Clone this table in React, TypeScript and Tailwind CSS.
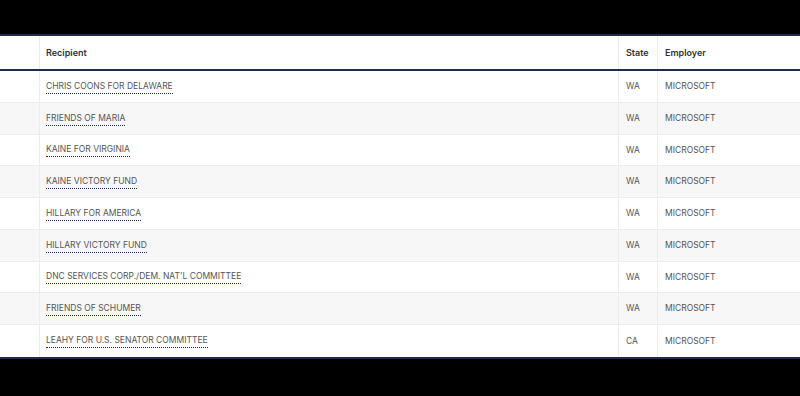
const rows: { recipient: string; state: string; employer: string }[] = [
  { recipient: 'CHRIS COONS FOR DELAWARE', state: 'WA', employer: 'MICROSOFT' },
  { recipient: 'FRIENDS OF MARIA', state: 'WA', employer: 'MICROSOFT' },
  { recipient: 'KAINE FOR VIRGINIA', state: 'WA', employer: 'MICROSOFT' },
  { recipient: 'KAINE VICTORY FUND', state: 'WA', employer: 'MICROSOFT' },
  { recipient: 'HILLARY FOR AMERICA', state: 'WA', employer: 'MICROSOFT' },
  { recipient: 'HILLARY VICTORY FUND', state: 'WA', employer: 'MICROSOFT' },
  { recipient: "DNC SERVICES CORP./DEM. NAT'L COMMITTEE", state: 'WA', employer: 'MICROSOFT' },
  { recipient: 'FRIENDS OF SCHUMER', state: 'WA', employer: 'MICROSOFT' },
  { recipient: 'LEAHY FOR U.S. SENATOR COMMITTEE', state: 'CA', employer: 'MICROSOFT' },
];

export default function App() {
  return (
    <div
      className="flex h-[396px] w-[800px] flex-col bg-black"
      style={{ fontFamily: 'Inter, "Liberation Sans", sans-serif' }}
    >
      <div className="h-[34px] shrink-0" />
      <div className="border-y-2 border-[#1f2d4b] bg-white">
        <div className="flex h-[35px] border-b-2 border-[#1f2d4b] text-[9px] font-semibold text-[#333]">
          <div className="w-[40px] shrink-0 border-r border-[#ececec]" />
          <div className="flex flex-1 items-center border-r border-[#ececec] pl-[6px]">Recipient</div>
          <div className="flex w-[39px] shrink-0 items-center border-r border-[#ececec] pl-[7px]">State</div>
          <div className="flex w-[142px] shrink-0 items-center pl-[7px]">Employer</div>
        </div>
        {rows.map((r, i) => (
          <div
            key={i}
            className={`flex h-[31.75px] border-b border-[#ececec] text-[8.5px] text-[#555] last:border-b-0 ${
              i % 2 === 1 ? 'bg-[#f7f7f7]' : 'bg-white'
            }`}
          >
            <div className="w-[40px] shrink-0 border-r border-[#ececec]" />
            <div className="flex flex-1 items-center border-r border-[#ececec] pl-[6px]">
              <span className="mt-[2px] border-b border-dotted border-[#1f2d4b] pb-[1px] leading-[11px]">
                {r.recipient}
              </span>
            </div>
            <div className="flex w-[39px] shrink-0 items-center border-r border-[#ececec] pl-[7px]">
              {r.state}
            </div>
            <div className="flex w-[142px] shrink-0 items-center pl-[7px]">{r.employer}</div>
          </div>
        ))}
      </div>
    </div>
  );
}
